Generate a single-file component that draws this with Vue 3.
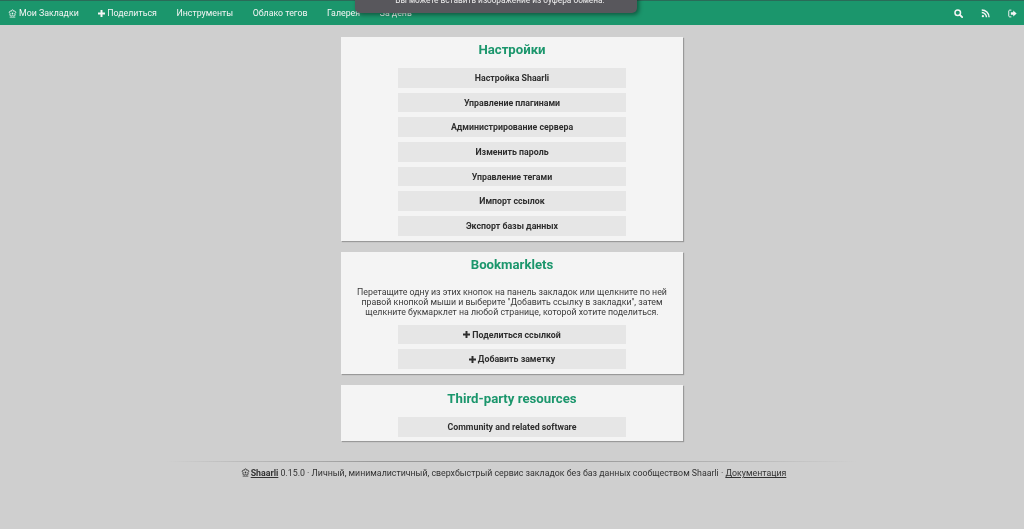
<script setup>
const navLinks = [
  { label: 'Мои Закладки', icon: 'flower' },
  { label: 'Поделиться', icon: 'plus' },
  { label: 'Инструменты' },
  { label: 'Облако тегов' },
  { label: 'Галерея' },
  { label: 'За день' },
]

const settings = [
  'Настройка Shaarli',
  'Управление плагинами',
  'Администрирование сервера',
  'Изменить пароль',
  'Управление тегами',
  'Импорт ссылок',
  'Экспорт базы данных',
]
</script>

<template>
  <div class="page">
    <header class="nav">
      <ul class="nav-list">
        <li v-for="link in navLinks" :key="link.label" class="nav-item">
          <svg v-if="link.icon === 'flower'" class="flower" viewBox="0 0 16 16">
            <path d="M8 1.600c1.300 0 2 1.100 2.100 2.400 1.400-.5 3-.2 3.500 1.300.5 1.500-.5 2.600-1.700 3.100.9 1.100 1.100 2.700-.2 3.600-1.300.9-2.700.3-3.700-.8-1 1.100-2.400 1.700-3.700.8-1.300-.9-1.100-2.500-.2-3.600C2.900 7.900 1.900 6.800 2.400 5.300 2.900 3.800 4.500 3.500 5.900 4 6 2.700 6.700 1.600 8 1.600z" fill="none" stroke="currentColor" stroke-width="1.700" stroke-linejoin="round" />
            <circle cx="8" cy="7.800" r="1.500" fill="currentColor" />
            <path d="M3 14.500h10" stroke="currentColor" stroke-width="1.300" />
          </svg>
          <svg v-if="link.icon === 'plus'" class="plus" viewBox="0 0 10 10">
            <path d="M3.600 0h2.800v3.600H10v2.800H6.400V10H3.600V6.400H0V3.600h3.600z" fill="currentColor" />
          </svg>
          {{ link.label }}
        </li>
      </ul>
      <div class="nav-icons">
        <svg class="nav-icon" viewBox="0 0 12 12">
          <circle cx="5" cy="5" r="3.700" fill="none" stroke="currentColor" stroke-width="2" />
          <path d="M7.800 7.800l3.100 3.100" stroke="currentColor" stroke-width="2.400" stroke-linecap="round" />
        </svg>
        <svg class="nav-icon" viewBox="0 0 12 12">
          <circle cx="2.500" cy="9.500" r="1.500" fill="currentColor" />
          <path d="M1 4.700a6.300 6.300 0 016.300 6.300M1 1.300A9.700 9.700 0 0110.700 11" fill="none" stroke="currentColor" stroke-width="1.900" />
        </svg>
        <svg class="nav-icon" viewBox="0 0 12 12">
          <path d="M4.500 1.500H2.200C1.500 1.500 1 2 1 2.700v6.600c0 .7.500 1.200 1.200 1.200h2.300" fill="none" stroke="currentColor" stroke-width="1.300" />
          <path d="M7 2l4.500 4L7 10V7.700H3.800V4.300H7z" fill="currentColor" />
        </svg>
      </div>
    </header>

    <div class="toast">Вы можете вставить изображение из буфера обмена.</div>

    <main class="content">
      <section class="card">
        <h2 class="card-title">Настройки</h2>
        <div class="buttons">
          <a v-for="item in settings" :key="item" class="btn">{{ item }}</a>
        </div>
      </section>

      <section class="card">
        <h2 class="card-title">Bookmarklets</h2>
        <p class="card-text">
          Перетащите одну из этих кнопок на панель закладок или щелкните по ней
          правой кнопкой мыши и выберите "Добавить ссылку в закладки", затем
          щелкните букмарклет на любой странице, которой хотите поделиться.
        </p>
        <div class="buttons">
          <a class="btn">
            <svg class="plus" viewBox="0 0 10 10">
              <path d="M3.600 0h2.800v3.600H10v2.800H6.400V10H3.600V6.400H0V3.600h3.600z" fill="currentColor" />
            </svg>
            Поделиться ссылкой
          </a>
          <a class="btn">
            <svg class="plus" viewBox="0 0 10 10">
              <path d="M3.600 0h2.800v3.600H10v2.800H6.400V10H3.600V6.400H0V3.600h3.600z" fill="currentColor" />
            </svg>
            Добавить заметку
          </a>
        </div>
      </section>

      <section class="card card-last">
        <h2 class="card-title">Third-party resources</h2>
        <div class="buttons">
          <a class="btn">Community and related software</a>
        </div>
      </section>
    </main>

    <footer class="footer">
      <svg class="flower dark" viewBox="0 0 16 16">
        <path d="M8 1.600c1.300 0 2 1.100 2.100 2.400 1.400-.5 3-.2 3.500 1.300.5 1.500-.5 2.600-1.700 3.100.9 1.100 1.100 2.700-.2 3.600-1.300.9-2.700.3-3.700-.8-1 1.100-2.400 1.700-3.700.8-1.300-.9-1.100-2.500-.2-3.600C2.900 7.900 1.900 6.800 2.400 5.300 2.900 3.800 4.500 3.500 5.900 4 6 2.700 6.700 1.600 8 1.600z" fill="none" stroke="currentColor" stroke-width="1.700" stroke-linejoin="round" />
        <circle cx="8" cy="7.800" r="1.500" fill="currentColor" />
        <path d="M3 14.500h10" stroke="currentColor" stroke-width="1.300" />
      </svg>
      <a class="footer-brand">Shaarli</a> 0.15.0 · Личный, минималистичный, сверхбыстрый сервис закладок без баз данных сообществом Shaarli · <a class="footer-link">Документация</a>
    </footer>
  </div>
</template>

<style>
html, body {
  margin: 0;
  background: #cfcfcf;
}
</style>

<style scoped>
.page {
  position: relative;
  height: 529px;
  overflow: hidden;
  background: #cfcfcf;
  color: #252525;
  font-family: Roboto, "Liberation Sans", sans-serif;
  font-size: 8.8px;
  filter: blur(0.4px);
}

.nav {
  display: flex;
  justify-content: space-between;
  align-items: center;
  height: 24px;
  border-top: 1px solid #2a6b58;
  background: #1b966c;
  color: #f5f5f5;
}

.nav-list {
  display: flex;
  gap: 19.6px;
  margin: 0;
  padding: 0 0 0 8px;
  list-style: none;
}

.nav-item {
  display: flex;
  align-items: center;
  gap: 2px;
  white-space: nowrap;
}

.flower {
  width: 9px;
  height: 9px;
}

.flower.dark {
  margin-right: 1px;
  vertical-align: -1px;
}

.plus {
  width: 7px;
  height: 7px;
}

.nav-icons {
  display: flex;
  gap: 18px;
  padding-right: 7px;
}

.nav-icon {
  width: 9px;
  height: 9px;
}

.toast {
  position: absolute;
  top: -9px;
  left: 355px;
  width: 282px;
  height: 22px;
  box-sizing: border-box;
  padding: 4px 0 0 8px;
  border-radius: 5px;
  background: #58575c;
  box-shadow: 2px 2px 4px rgba(0, 0, 0, 0.4);
  color: #eeeeee;
  font-size: 8.3px;
  text-align: center;
  white-space: nowrap;
}

.content {
  display: flex;
  flex-direction: column;
  align-items: center;
  gap: 11px;
  padding-top: 12px;
}

.card {
  width: 342px;
  box-sizing: border-box;
  padding-bottom: 5px;
  background: #f4f4f4;
  box-shadow: 1px 1px 1px #999999;
}

.card-last {
  padding-bottom: 4.5px;
}

.card-title {
  margin: 0;
  padding-top: 5px;
  height: 26px;
  line-height: 15px;
  font-size: 13.2px;
  font-weight: 700;
  color: #1b966c;
  text-align: center;
}

.card-last .card-title {
  padding-top: 6px;
}

.card-text {
  margin: 0;
  padding: 4px 14px 7px;
  line-height: 10.300px;
  color: #3a3a3a;
  text-align: center;
}

.buttons {
  display: flex;
  flex-direction: column;
  align-items: center;
  gap: 5px;
}

.btn {
  display: flex;
  align-items: center;
  justify-content: center;
  gap: 2px;
  width: 228px;
  height: 19.700px;
  background: #e6e6e6;
  color: #2e2e2e;
  font-weight: 700;
}

.footer {
  margin: 20px 167px 0;
  padding: 6px 0 0 3px;
  border-top: 1px solid;
  border-image: linear-gradient(to right, #cfcfcf, #9a9a9a 30%, #9a9a9a 60%, #cfcfcf) 1;
  color: #333333;
  text-align: center;
  white-space: nowrap;
}

.footer-brand {
  font-weight: 700;
  text-decoration: underline;
}

.footer-link {
  text-decoration: underline;
}
</style>
